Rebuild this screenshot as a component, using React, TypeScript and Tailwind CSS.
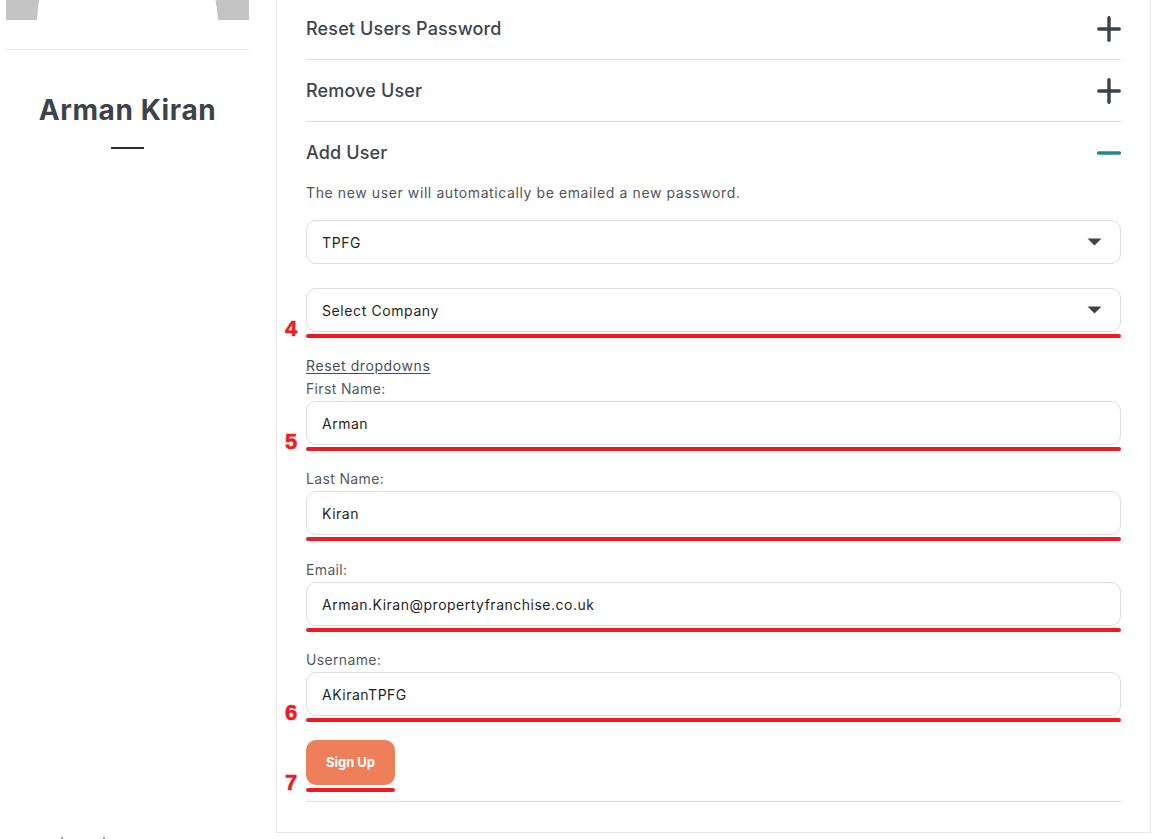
import React from "react";

const FONT = { fontFamily: "Inter, 'Noto Sans', sans-serif" };

function PlusIcon() {
  return (
    <svg width="24" height="26" viewBox="0 0 24 26" className="block">
      <line x1="1.75" y1="13" x2="22.25" y2="13" stroke="#3c424b" strokeWidth="3.4" strokeLinecap="round" />
      <line x1="12" y1="1.75" x2="12" y2="24.25" stroke="#3c424b" strokeWidth="3.4" strokeLinecap="round" />
    </svg>
  );
}

function MinusIcon() {
  return (
    <svg width="24" height="6" viewBox="0 0 24 6" className="block">
      <line x1="1.75" y1="3" x2="22.25" y2="3" stroke="#1f8b88" strokeWidth="3.6" strokeLinecap="round" />
    </svg>
  );
}

function Caret() {
  return (
    <svg width="15" height="8" viewBox="0 0 15 8" className="block">
      <path d="M0.5 0.5 L14.5 0.5 L7.5 7.5 Z" fill="#3f4247" />
    </svg>
  );
}

function Mark({ n, offset = 6 }: { n?: string; offset?: number }) {
  return (
    <>
      <div
        className="absolute left-0 right-0 h-[4px] rounded-full bg-[#ed1c24]"
        style={{ bottom: -offset }}
      />
      {n && (
        <div
          className="absolute -left-[21px] text-[22px] font-bold leading-none text-[#ed1c24]"
          style={{ fontFamily: "'Liberation Sans', Arial, sans-serif", bottom: -(offset + 2), WebkitTextStroke: "0.6px #ed1c24" }}
        >
          {n}
        </div>
      )}
    </>
  );
}

function Select({ value, mark }: { value: string; mark?: string }) {
  return (
    <div className="relative">
      <div className="flex h-[44px] items-center justify-between rounded-[10px] border border-[#dcdce6] bg-white pl-[15px] pr-[18px] text-[14px] tracking-[0.6px] text-[#1f1f1f]">
        <span>{value}</span>
        <Caret />
      </div>
      {mark !== undefined && <Mark n={mark || undefined} />}
    </div>
  );
}

function Field({ label, value, mark, className = "" }: { label: string; value: string; mark?: string; className?: string }) {
  return (
    <div className={`flex flex-col ${className}`}>
      <div className="h-[20px] text-[14px] leading-[20px] tracking-[0.35px] text-[#555a61]">{label}</div>
      <div className="relative mt-[2px]">
        <div className="flex h-[44px] items-center rounded-[10px] border border-[#dcdce6] bg-white pl-[15px] text-[14px] tracking-[0.5px] text-[#1f1f1f]">
          {value}
        </div>
        <Mark n={mark} />
      </div>
    </div>
  );
}

function Row({ title, open }: { title: string; open?: boolean }) {
  return (
    <div className={`flex items-center justify-between ${open ? "h-[61px]" : "h-[62px] border-b border-[#dddde3]"}`}>
      <span className="text-[18px] font-medium tracking-[0.15px] text-[#3d4450]">{title}</span>
      {open ? <MinusIcon /> : <PlusIcon />}
    </div>
  );
}

export default function App() {
  return (
    <div className="relative min-h-[839px] overflow-hidden bg-white" style={FONT}>
      <div className="flex pl-[6px]">
        {/* Left column */}
        <div className="flex w-[243px] shrink-0 flex-col items-center">
          <svg width="243" height="20" viewBox="0 0 243 20" className="block">
            <rect width="243" height="20" fill="#c4c4c4" />
            <path d="M33 0 Q31.6 10 31 20 L212 20 Q211.4 10 209.5 0 Z" fill="#ffffff" />
          </svg>
          <div className="mt-[29px] h-px w-full bg-[#e8e8e8]" />
          <h1 className="mt-[42px] text-[28px] font-bold leading-[36px] tracking-[0.6px] text-[#3d434a]">
            Arman Kiran
          </h1>
          <div className="mt-[19px] h-[1.5px] w-[33px] bg-[#2b2b2b]" />
        </div>

        {/* Main panel */}
        <div className="-mt-[2px] ml-[27px] w-[875px] shrink-0 border-x border-b border-[#e6e6e6] px-[29px] pb-[30px]">
          <Row title="Reset Users Password" />
          <Row title="Remove User" />
          <Row title="Add User" open />
          <div className="flex flex-col border-b border-[#dddde3] pb-[16px]">
            <p className="h-[20px] text-[14px] leading-[20px] tracking-[0.6px] text-[#4f545c]">
              The new user will automatically be emailed a new password.
            </p>
            <div className="mt-[17px]">
              <Select value="TPFG" />
            </div>
            <div className="mt-[24px]">
              <Select value="Select Company" mark="4" />
            </div>
            <a className="mt-[24px] h-[20px] self-start text-[14px] leading-[20px] tracking-[0.6px] text-[#4a4f57] underline underline-offset-2">
              Reset dropdowns
            </a>
            <div className="mt-[3px] flex flex-col">
              <Field label="First Name:" value="Arman" mark="5" />
              <Field label="Last Name:" value="Kiran" className="mt-[24px]" />
              <Field label="Email:" value="Arman.Kiran@propertyfranchise.co.uk" className="mt-[25px]" />
              <Field label="Username:" value="AKiranTPFG" mark="6" className="mt-[24px]" />
            </div>
            <div className="relative mt-[24px] self-start">
              <button className="flex h-[45px] w-[89px] items-center justify-center rounded-[10px] bg-[#ed805b] text-[13px] font-bold text-white">
                Sign Up
              </button>
              <Mark n="7" offset={7} />
            </div>
          </div>
        </div>
      </div>
      <div className="absolute left-[61px] top-[837px] h-[2px] w-[2px] bg-[#9aa0a6]" />
      <div className="absolute left-[103px] top-[837px] h-[2px] w-[2px] bg-[#9aa0a6]" />
    </div>
  );
}
